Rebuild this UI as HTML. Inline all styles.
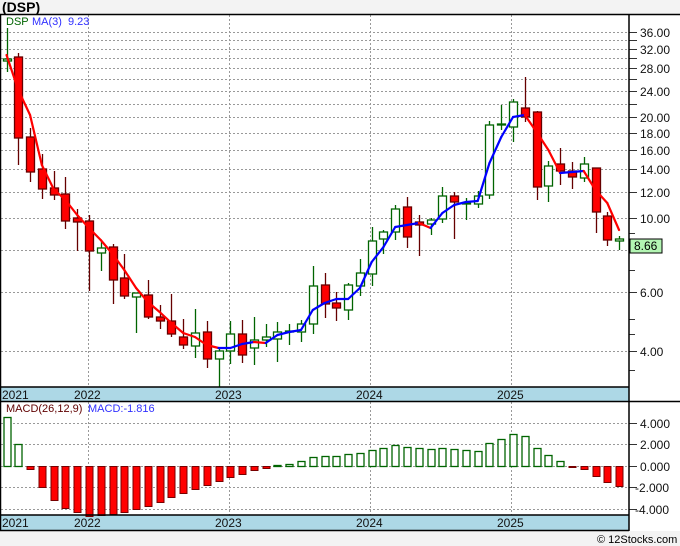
<!DOCTYPE html>
<html><head><meta charset="utf-8"><style>
html,body{margin:0;padding:0;background:#f3f3f3;width:680px;height:546px;overflow:hidden}
svg{display:block;font-family:"Liberation Sans",sans-serif}
</style></head><body>
<svg id="s" width="680" height="546" xmlns="http://www.w3.org/2000/svg">
<rect x="0" y="14" width="680" height="517" fill="#fff"/>
<text x="2" y="12" font-size="14" font-weight="bold" fill="#000">(DSP)</text>
<g id="grid"></g>
<rect x="0" y="387" width="629" height="14" fill="#add8e6"/>
<rect x="0" y="515" width="629" height="15" fill="#add8e6"/>
<g id="main"></g>
<g font-size="12" fill="#111">
<text x="2" y="399">2021</text><text x="74" y="399">2022</text><text x="215" y="399">2023</text><text x="356" y="399">2024</text><text x="497" y="399">2025</text>
<text x="2" y="527">2021</text><text x="74" y="527">2022</text><text x="215" y="527">2023</text><text x="356" y="527">2024</text><text x="497" y="527">2025</text>
</g>
<g font-size="11">
<text x="6" y="25" fill="#006400">DSP</text><text x="32" y="25" fill="#3030ff">MA(3)</text><text x="68" y="25" fill="#3030ff">9.23</text>
<text x="6" y="412" fill="#600000">MACD(26,12,9)</text><text x="88" y="412" fill="#3030ff">MACD:-1.816</text>
</g>
<g font-size="12" fill="#111" id="ax"></g>
<g stroke="#000" stroke-width="1.5" fill="none">
<line x1="0" y1="14.5" x2="680" y2="14.5"/>
<line x1="0.5" y1="14" x2="0.5" y2="531"/>
<line x1="629" y1="14" x2="629" y2="531"/>
<line x1="0" y1="387" x2="629" y2="387"/>
<line x1="0" y1="401.5" x2="680" y2="401.5"/>
<line x1="0" y1="515" x2="629" y2="515"/>
<line x1="0" y1="530.5" x2="629" y2="530.5"/>
</g>
<rect x="630" y="239" width="32" height="14" fill="#b3f5b3" stroke="#000"/>
<text x="634" y="250" font-size="12" fill="#000">8.66</text>
<text x="597" y="543" font-size="11" fill="#000">© 12Stocks.com</text>
</svg>
<script>
const NS="http://www.w3.org/2000/svg";
function el(p,t,a){const e=document.createElementNS(NS,t);for(const k in a)e.setAttribute(k,a[k]);p.appendChild(e);return e;}
const g=document.getElementById('grid'),m=document.getElementById('main'),ax=document.getElementById('ax');
const py=p=>32+145.2*Math.log(36/p);
[36,34,32,30,28,26,24,22,20,18,16,14,12,10,8,6,4].forEach(p=>{const y=Math.round(py(p))+.5;el(g,'line',{x1:1,x2:629,y1:y,y2:y,stroke:'#999','stroke-dasharray':'2,2'});el(ax,'line',{x1:629,x2:637,y1:y,y2:y,stroke:'#333'});});
[36,32,28,24,20,18,16,14,12,10,6,4].forEach(p=>{el(ax,'text',{x:640,y:Math.round(py(p))+5}).textContent=p.toFixed(2);});
[26,22,9,7,5,4.5,3.5].forEach(p=>{const y=Math.round(py(p))+.5;el(ax,'line',{x1:629,x2:635,y1:y,y2:y,stroke:'#333'});});
[[423,'4.000'],[444,'2.000'],[466,'0.000'],[487,'-2.000'],[509,'-4.000']].forEach(([y,t])=>{el(g,'line',{x1:1,x2:629,y1:y+.5,y2:y+.5,stroke:'#999','stroke-dasharray':'2,2'});el(ax,'line',{x1:629,x2:637,y1:y+.5,y2:y+.5,stroke:'#333'});el(ax,'text',{x:t[0]=='-'?635:640,y:y+5}).textContent=t;});
[88,229,370,511].forEach(x=>{el(g,'line',{x1:x+.5,x2:x+.5,y1:15,y2:387,stroke:'#999','stroke-dasharray':'2,2'});el(g,'line',{x1:x+.5,x2:x+.5,y1:402,y2:515,stroke:'#999','stroke-dasharray':'2,2'});});
el(g,'line',{x1:6.5,x2:6.5,y1:387,y2:401,stroke:'#999'});
const C=[[28,59,61,72,'g'],[53,57,138,165,'r'],[128,137,172,182,'r'],[154,169,189,199,'r'],[171,188,195,200,'r'],[177,194,221,229,'r'],[209,218,222,251,'r'],[215,221,251,291,'r'],[241,248,253,271,'g'],[244,247,280,304,'r'],[254,278,296,299,'r'],[293,293,297,333,'g'],[280,295,317,319,'r'],[305,317,321,329,'r'],[294,321,334,337,'r'],[319,337,345,349,'r'],[309,333,346,358,'g'],[321,332,359,368,'r'],[348,351,359,387,'g'],[321,334,351,364,'g'],[320,334,355,363,'r'],[317,340,348,365,'g'],[324,337,340,347,'g'],[322,332,339,362,'g'],[324,331,332,345,'g'],[320,324,332,342,'g'],[266,286,324,334,'g'],[273,285,304,318,'r'],[292,303,308,321,'r'],[283,285,310,320,'g'],[259,273,286,296,'g'],[227,241,274,286,'g'],[230,232,239,254,'g'],[205,209,232,240,'g'],[197,207,237,248,'r'],[215,222,225,256,'r'],[218,220,224,235,'g'],[187,196,219,223,'g'],[192,196,202,239,'r'],[198,203,204,220,'g'],[191,196,204,208,'g'],[121,125,195,199,'g'],[105,124,125,130,'g'],[99,102,127,142,'g'],[77,108,117,122,'r'],[111,112,187,200,'r'],[161,166,186,202,'g'],[148,164,171,185,'r'],[162,171,177,189,'r'],[157,164,178,182,'g'],[168,168,212,233,'r'],[212,216,240,246,'r'],[236,239,241,250,'g']];
const MA=[55,90,115,165,189,200,215,228,240,254,270,288,302,312,323,333,337,345,348,348,344,342,343,335,332,330,310,303,299,299,288,262,247,227,225,223,228,213,205,202,201,163,137,117,115,132,150,173,172,171,190,203,230];
const MC=[417,444,469,487,500,508,512,516,515,514,512,509,506,502,497,493,489,485,481,477,474,470,468,465,464,461,457,456,456,454,453,450,448,445,447,448,449,448,449,450,451,443,439,434,436,448,455,461,467,469,476,482,486];
const X=i=>6.5+i*11.78;
MC.forEach((v,i)=>{const x=Math.round(X(i))-3.5,pos=v<466;const y=Math.min(v,466),h=Math.max(Math.abs(v-466),1);
if(pos)el(m,'rect',{x:x+.5,y:y+.5,width:7,height:h,fill:'#fff',stroke:'#006400','stroke-width':1.3});
else el(m,'rect',{x:x+.5,y:466.5,width:7,height:h,fill:'#f00',stroke:'#700','stroke-width':1});});
C.forEach((c,i)=>{const x=Math.round(X(i))+.5;const [h,t,b,l,k]=c;const col=k=='g'?'#006400':'#600';
el(m,'line',{x1:x,x2:x,y1:h,y2:l,stroke:col,'stroke-width':1.3});
el(m,'rect',{x:x-4,y:t,width:8,height:Math.max(b-t,1),fill:k=='g'?'#fff':'#f00',stroke:col,'stroke-width':1.3});});
for(let i=0;i<MA.length-1;i++){el(m,'line',{x1:X(i),y1:MA[i],x2:X(i+1),y2:MA[i+1],stroke:MA[i+1]>MA[i]?'#f00':'#0000ff','stroke-width':2.2,'stroke-linecap':'round'});}
</script>
</body></html>
